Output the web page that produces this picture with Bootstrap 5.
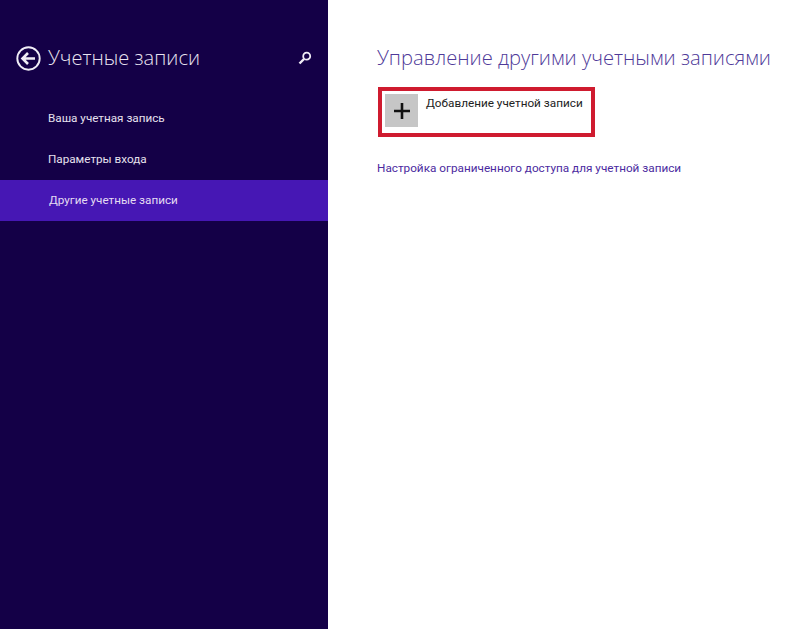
<!DOCTYPE html>
<html lang="ru"><head><meta charset="utf-8">
<link rel="stylesheet" href="https://cdn.jsdelivr.net/npm/bootstrap@5.3.0/dist/css/bootstrap.min.css">
<style>
html,body{height:629px;overflow:hidden;background:#fff;font-family:"Open Sans","Noto Sans","Liberation Sans",sans-serif}
.side-pane{width:328px;height:629px;background:#140047;color:#eee9f4;flex:none}
.side-head{padding:43px 0 0 16px}
.back-ico{flex:none}
.side-title{font-size:20.1px;font-weight:300;line-height:30px;margin:0 0 0 7px;color:#e8e3f0;flex:1}
.search-ico{margin:0 16px 0 0}
.side-list{margin-top:25px}
.side-link{display:block;height:41px;line-height:41px;padding-left:48px;font-family:Roboto,sans-serif;font-size:11.7px;color:#e6e0ee;text-decoration:none;white-space:nowrap}
.side-link.is-on{background:#4617b4;padding-left:49px;color:#e4dcf2}
.main-pane{padding:42px 0 0 49px}
.main-title{font-size:20.2px;font-weight:300;line-height:30px;color:#4f3a99;margin:0;white-space:nowrap}
.add-box{width:217px;height:50px;border:4px solid #cf1b2f;margin:15px 0 0 1px;padding:3px 0 0 3px;gap:8px}
.plus-tile{width:33px;height:33px;background:#c6c6c6;flex:none}
.add-label{font-family:Roboto,sans-serif;font-size:11.75px;line-height:16px;color:#222;margin-top:1px;white-space:nowrap}
.limit-link{display:block;margin-top:23px;font-family:Roboto,sans-serif;font-size:11.75px;line-height:17px;color:#4b2aa0;text-decoration:none;white-space:nowrap}
</style></head><body>
<div class="d-flex">
<nav class="side-pane">
 <div class="side-head d-flex align-items-center">
  <svg class="back-ico" width="25" height="25" viewBox="0 0 25 25" fill="none" stroke="#f0ecf6"><circle cx="12.5" cy="12.5" r="11.2" stroke-width="1.9"/><path d="M19 12.5H7M12 7l-5.5 5.5L12 18" stroke-width="2.6"/></svg>
  <h1 class="side-title">Учетные записи</h1>
  <svg class="search-ico" width="14" height="14" viewBox="0 0 14 14" fill="none" stroke="#f0ecf6"><circle cx="8.7" cy="5.2" r="3.5" stroke-width="1.8"/><path d="M6 8L1.5 12.5" stroke-width="2.4"/></svg>
 </div>
 <div class="side-list">
  <a class="side-link" href="#">Ваша учетная запись</a>
  <a class="side-link" href="#">Параметры входа</a>
  <a class="side-link is-on" href="#">Другие учетные записи</a>
 </div>
</nav>
<main class="main-pane flex-grow-1">
 <h2 class="main-title">Управление другими учетными записями</h2>
 <div class="add-box d-flex">
  <div class="plus-tile d-flex align-items-center justify-content-center"><svg width="16" height="16" viewBox="0 0 16 16"><path d="M8 0v16M0 8h16" stroke="#111" stroke-width="2.6"/></svg></div>
  <div class="add-label">Добавление учетной записи</div>
 </div>
 <a class="limit-link" href="#">Настройка ограниченного доступа для учетной записи</a>
</main>
</div>
</body></html>
